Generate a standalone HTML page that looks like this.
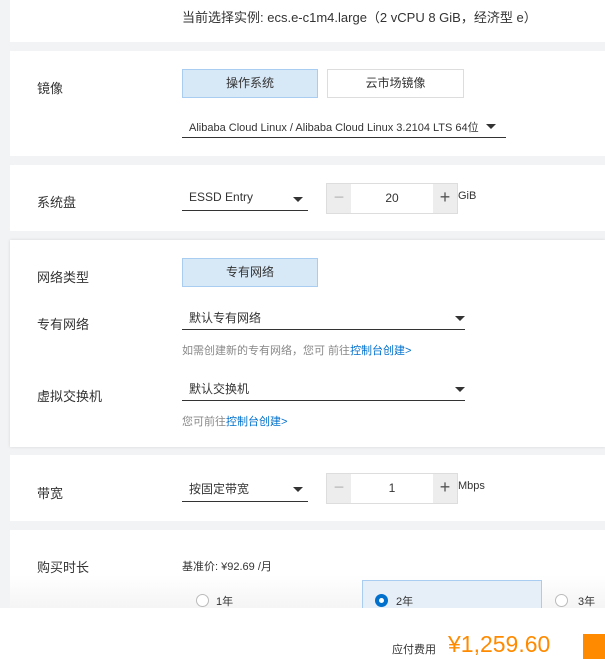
<!DOCTYPE html>
<html><head><meta charset="utf-8"><style>
*{margin:0;padding:0;box-sizing:border-box}
body{width:605px;height:659px;background:#f2f3f5;font-family:"Liberation Sans","Noto Sans CJK SC",sans-serif;color:#333;position:relative;overflow:hidden;font-size:12px}
.card{position:absolute;left:10px;right:0;background:#fff}
.a{position:absolute;white-space:nowrap}
.lbl{font-size:13px;color:#333}
.btn{position:absolute;height:29px;text-align:center;line-height:27px;font-size:12px;border:1px solid #ddd;background:#fff}
.sel{background:#d7e8f7;border-color:#a9cdf0}
.ul{position:absolute;height:1px;background:#333}
.arr{position:absolute;width:0;height:0;border-left:5px solid transparent;border-right:5px solid transparent;border-top:5px solid #333}
.step{position:absolute;width:132px;height:31px;border:1px solid #ddd;background:#fff}
.step .m{position:absolute;left:0;top:0;width:24px;height:29px;background:#ededed;color:#bbb;text-align:center;line-height:27px;font-size:18px}
.step .p{position:absolute;right:0;top:0;width:24px;height:29px;background:#ededed;color:#555;text-align:center;line-height:27px;font-size:18px}
.step .v{position:absolute;left:24px;right:24px;text-align:center;line-height:29px;font-size:12px}
.hint{color:#888;font-size:11px}
.hint b{font-weight:normal;color:#0070cc}
</style></head><body>
<div class="card" style="top:0;height:42px"></div>
<div class="a lbl" style="left:182px;top:7px;font-size:13px">当前选择实例: ecs.e-c1m4.large（2 vCPU 8 GiB，经济型 e）</div>

<div class="card" style="top:51px;height:105px"></div>
<div class="a lbl" style="left:37px;top:78px">镜像</div>
<div class="btn sel" style="left:182px;top:69px;width:136px">操作系统</div>
<div class="btn" style="left:327px;top:69px;width:137px">云市场镜像</div>
<div class="a" style="left:189px;top:119px;font-size:11px">Alibaba Cloud Linux / Alibaba Cloud Linux 3.2104 LTS 64位</div>
<div class="arr" style="left:486px;top:124px"></div>
<div class="ul" style="left:182px;width:324px;top:137px"></div>

<div class="card" style="top:165px;height:66px"></div>
<div class="a lbl" style="left:37px;top:192px">系统盘</div>
<div class="a" style="left:189px;top:190px">ESSD Entry</div>
<div class="arr" style="left:293px;top:197px"></div>
<div class="ul" style="left:182px;width:126px;top:210px"></div>
<div class="step" style="left:326px;top:183px"><div class="m">−</div><div class="v">20</div><div class="p">+</div></div>
<div class="a" style="left:458px;top:190px;font-size:11px">GiB</div>

<div class="card" style="top:240px;height:207px;box-shadow:0 0 3px rgba(0,0,0,.12)"></div>
<div class="a lbl" style="left:37px;top:267px">网络类型</div>
<div class="btn sel" style="left:182px;top:258px;width:136px">专有网络</div>
<div class="a lbl" style="left:37px;top:314px">专有网络</div>
<div class="a" style="left:189px;top:309px">默认专有网络</div>
<div class="arr" style="left:455px;top:316px"></div>
<div class="ul" style="left:182px;width:283px;top:329px"></div>
<div class="a hint" style="left:182px;top:342px">如需创建新的专有网络，您可 前往<b>控制台创建&gt;</b></div>
<div class="a lbl" style="left:37px;top:386px">虚拟交换机</div>
<div class="a" style="left:189px;top:380px">默认交换机</div>
<div class="arr" style="left:455px;top:387px"></div>
<div class="ul" style="left:182px;width:283px;top:400px"></div>
<div class="a hint" style="left:182px;top:413px">您可前往<b>控制台创建&gt;</b></div>

<div class="card" style="top:455px;height:66px"></div>
<div class="a lbl" style="left:37px;top:483px">带宽</div>
<div class="a" style="left:189px;top:480px">按固定带宽</div>
<div class="arr" style="left:293px;top:487px"></div>
<div class="ul" style="left:182px;width:126px;top:501px"></div>
<div class="step" style="left:326px;top:473px"><div class="m">−</div><div class="v">1</div><div class="p">+</div></div>
<div class="a" style="left:458px;top:480px;font-size:11px">Mbps</div>

<div class="card" style="top:530px;height:80px;background:linear-gradient(#fff 0,#fff 45px,#f4f4f5 80px)"></div>
<div class="a lbl" style="left:37px;top:557px">购买时长</div>
<div class="a" style="left:182px;top:558px;font-size:11px">基准价: ¥92.69 /月</div>
<div class="a" style="left:362px;top:580px;width:180px;height:30px;border:1px solid #a9cdf0;background:#e6eff8"></div>
<div class="a" style="left:196px;top:594px;width:13px;height:13px;border:1px solid #bbb;border-radius:50%;background:#fff"></div>
<div class="a" style="left:216px;top:593px;font-size:11px">1年</div>
<div class="a" style="left:375px;top:594px;width:13px;height:13px;border-radius:50%;background:#0070cc"><div style="position:absolute;left:4px;top:4px;width:5px;height:5px;border-radius:50%;background:#fff"></div></div>
<div class="a" style="left:396px;top:593px;font-size:11px">2年</div>
<div class="a" style="left:555px;top:594px;width:13px;height:13px;border:1px solid #bbb;border-radius:50%;background:#fff"></div>
<div class="a" style="left:578px;top:593px;font-size:11px">3年</div>

<div class="a" style="left:0;top:608px;width:605px;height:51px;background:#fff"></div>
<div class="a" style="left:392px;top:641px;font-size:11px">应付费用</div>
<div class="a" style="left:448px;top:631px;font-size:23px;color:#ff8a00">¥1,259.60</div>
<div class="a" style="left:583px;top:634px;width:22px;height:25px;background:#ff8a00"></div>
</body></html>
